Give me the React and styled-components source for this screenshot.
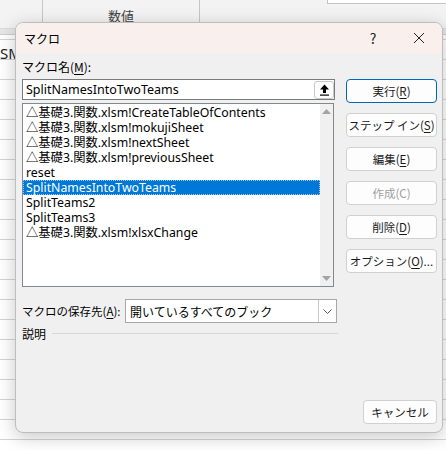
import React from 'react'
import styled, { createGlobalStyle } from 'styled-components'

const GlobalStyle = createGlobalStyle`
body {
  margin: 0;
  font-family: "Noto Sans", "Noto Sans CJK JP", sans-serif;
  color: #000;
}
`;

const Screen = styled.div`
position: relative;
width: 446px;
height: 450px;
overflow: hidden;
background-color: #ffffff;
background-image:
  repeating-linear-gradient(to bottom, transparent 0, transparent 19px, #d4d4d4 19px, #d4d4d4 20px);
`;

const Ribbon = styled.div`
height: 28px;
background: #f3f3f3;
border-bottom: 1px solid #dadada;
display: flex;
position: relative;
`;

const RibbonGroup = styled.div`
width: ${p => p.w}px;
border-right: 1px solid #c6c6c6;
height: 24px;
display: flex;
align-items: flex-end;
justify-content: center;
font-size: 13px;
color: #444;
line-height: 16px;
overflow: hidden;
font-family: "Noto Sans CJK JP", sans-serif;
`;

const TopField = styled.div`
position: absolute;
left: 327px;
top: -2px;
width: 130px;
height: 4px;
background: #fff;
border: 1px solid #c4c4c4;
`;

const HeaderStrip = styled.div`
height: 5px;
background: #e6e6e6;
border-bottom: 1px solid #cfcfcf;
`;

const CellText = styled.div`
padding: 10px 0 0 0;
font-size: 15px;
line-height: 16px;
color: #222;
`;

const Dialog = styled.div`
position: absolute;
left: 15px;
top: 22px;
width: 428px;
height: 411px;
border-radius: 8px;
overflow: hidden;
background: #f0f0f0;
border: 1px solid #bdbdbd;
box-sizing: border-box;
box-shadow: 0 4px 18px rgba(0,0,0,0.22);
display: flex;
flex-direction: column;
white-space: nowrap;
`;

const TitleBar = styled.div`
height: 30px;
flex: none;
background: #f9f0ee;
display: flex;
align-items: center;
padding-left: 8px;
font-size: 12px;
font-family: "Noto Sans CJK JP", sans-serif;
`;

const TitleText = styled.div`
flex: 1;
`;

const TitleButton = styled.div`
width: 46px;
height: 30px;
display: flex;
align-items: center;
justify-content: center;
font-size: 14px;
color: #222;
`;

const Body = styled.div`
flex: 1;
display: flex;
flex-direction: column;
padding: 6px 5px 0 6px;
`;

const Top = styled.div`
display: flex;
`;

const LeftCol = styled.div`
width: 316px;
display: flex;
flex-direction: column;
`;

const Label = styled.div`
font-size: 12px;
line-height: 16px;
height: 20px;
font-family: "Noto Sans CJK JP", sans-serif;
`;

const U = styled.span`
text-decoration: underline;
text-underline-offset: 2px;
`;

const InputBox = styled.div`
height: 21px;
box-sizing: border-box;
border: 1px solid #7a7a7a;
background: #fff;
display: flex;
align-items: center;
padding-left: 3px;
font-size: 12.5px;
`;

const InputText = styled.div`
flex: 1;
`;

const UpButton = styled.div`
width: 20px;
height: 18px;
box-sizing: border-box;
border: 1px solid #c9c9c9;
border-radius: 3px;
background: #fdfdfd;
display: flex;
align-items: center;
justify-content: center;
`;

const ListBox = styled.div`
margin-top: 3px;
width: 312px;
height: 184px;
box-sizing: border-box;
border: 1px solid #828790;
background: #fff;
display: flex;
`;

const Items = styled.div`
flex: 1;
padding-top: 1px;
`;

const Item = styled.div`
height: 15px;
line-height: 15px;
font-size: 12.3px;
padding-left: 3px;
background: ${p => (p.selected ? '#0078d7' : 'transparent')};
color: ${p => (p.selected ? '#fff' : '#000')};
outline: ${p => (p.selected ? '1px dotted #9ec8f0' : 'none')};
outline-offset: -1px;
`;

const ScrollBar = styled.div`
width: 13px;
background: #f0f0f0;
display: flex;
flex-direction: column;
justify-content: space-between;
align-items: center;
padding: 5px 0 5px;
`;

const RightCol = styled.div`
margin-left: 11px;
padding-top: 20px;
display: flex;
flex-direction: column;
gap: 10px;
`;

const Button = styled.div`
width: 91px;
height: 24px;
box-sizing: border-box;
border: 1px solid ${p => (p.primary ? '#0067c0' : '#d0d0d0')};
border-radius: 4px;
background: #fdfdfd;
display: flex;
align-items: center;
justify-content: center;
font-size: 11.5px;
font-family: "Noto Sans CJK JP", sans-serif;
color: ${p => (p.disabled ? '#9d9d9d' : '#1a1a1a')};
`;

const SaveRow = styled.div`
margin-top: 12px;
display: flex;
align-items: center;
`;

const SaveLabel = styled.div`
width: 103px;
font-size: 11.5px;
font-family: "Noto Sans CJK JP", sans-serif;
`;

const Select = styled.div`
width: 212px;
height: 24px;
box-sizing: border-box;
border: 1px solid #a8a8a8;
background: #fff;
display: flex;
align-items: center;
font-size: 12px;
font-family: "Noto Sans CJK JP", sans-serif;
`;

const SelectText = styled.div`
flex: 1;
padding-left: 4px;
`;

const SelectArrow = styled.div`
width: 17px;
height: 100%;
border-left: 1px solid #c8c8c8;
display: flex;
align-items: center;
justify-content: center;
`;

const DescRow = styled.div`
margin-top: 2px;
display: flex;
align-items: center;
width: 316px;
font-size: 12px;
font-family: "Noto Sans CJK JP", sans-serif;
`;

const Rule = styled.div`
flex: 1;
height: 1px;
background: #d8d8d8;
margin-left: 6px;
`;

const Footer = styled.div`
margin-top: auto;
display: flex;
justify-content: flex-end;
padding: 0 0 8px;
`;

const CancelButton = styled(Button)`
width: 74px;
`;

const items = [
  '△基礎3.関数.xlsm!CreateTableOfContents',
  '△基礎3.関数.xlsm!mokujiSheet',
  '△基礎3.関数.xlsm!nextSheet',
  '△基礎3.関数.xlsm!previousSheet',
  'reset',
  'SplitNamesIntoTwoTeams',
  'SplitTeams2',
  'SplitTeams3',
  '△基礎3.関数.xlsm!xlsxChange',
];

const Arrow = ({ down }) => (
  <svg width="9" height="5" viewBox="0 0 9 5">
    <path d={down ? 'M0 0 H9 L4.5 5 Z' : 'M0 5 H9 L4.5 0 Z'} fill="#a3a3a3" />
  </svg>
);

export default function App() {
  return (
    <Screen>
      <GlobalStyle />
      <Ribbon>
        <RibbonGroup w={42} />
        <RibbonGroup w={156}>数値</RibbonGroup>
        <TopField />
      </Ribbon>
      <HeaderStrip />
      <CellText>SM</CellText>
      <Dialog>
        <TitleBar>
          <TitleText>マクロ</TitleText>
          <TitleButton>?</TitleButton>
          <TitleButton>
            <svg width="12" height="12" viewBox="0 0 12 12">
              <path d="M1 1 L11 11 M11 1 L1 11" stroke="#222" strokeWidth="1" />
            </svg>
          </TitleButton>
        </TitleBar>
        <Body>
          <Top>
            <LeftCol>
              <Label>マクロ名(<U>M</U>):</Label>
              <InputBox>
                <InputText>SplitNamesIntoTwoTeams</InputText>
                <UpButton>
                  <svg width="11" height="12" viewBox="0 0 11 12">
                    <path d="M5.5 0.5 L10 5.5 H7 V9 H4 V5.5 H1 Z" fill="#000" />
                    <rect x="1" y="10.5" width="9" height="1.2" fill="#000" />
                  </svg>
                </UpButton>
              </InputBox>
              <ListBox>
                <Items>
                  {items.map(t => (
                    <Item key={t} selected={t === 'SplitNamesIntoTwoTeams'}>{t}</Item>
                  ))}
                </Items>
                <ScrollBar>
                  <Arrow />
                  <Arrow down />
                </ScrollBar>
              </ListBox>
            </LeftCol>
            <RightCol>
              <Button primary>実行(<U>R</U>)</Button>
              <Button>ステップ イン(<U>S</U>)</Button>
              <Button>編集(<U>E</U>)</Button>
              <Button disabled>作成(C)</Button>
              <Button>削除(<U>D</U>)</Button>
              <Button>オプション(<U>O</U>)...</Button>
            </RightCol>
          </Top>
          <SaveRow>
            <SaveLabel>マクロの保存先(<U>A</U>):</SaveLabel>
            <Select>
              <SelectText>開いているすべてのブック</SelectText>
              <SelectArrow>
                <svg width="9" height="5" viewBox="0 0 9 5">
                  <path d="M0.5 0.5 L4.5 4.5 L8.5 0.5" fill="none" stroke="#555" strokeWidth="1" />
                </svg>
              </SelectArrow>
            </Select>
          </SaveRow>
          <DescRow>
            説明
            <Rule />
          </DescRow>
          <Footer>
            <CancelButton>キャンセル</CancelButton>
          </Footer>
        </Body>
      </Dialog>
    </Screen>
  )
}
